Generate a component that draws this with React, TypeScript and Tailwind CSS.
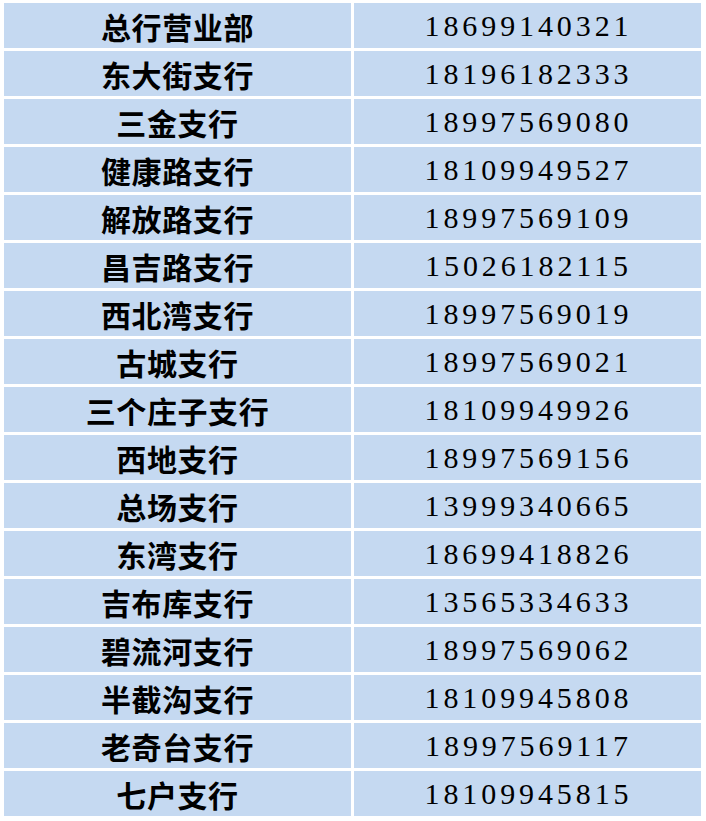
const rows: [string, string][] = [
  ["总行营业部", "18699140321"],
  ["东大街支行", "18196182333"],
  ["三金支行", "18997569080"],
  ["健康路支行", "18109949527"],
  ["解放路支行", "18997569109"],
  ["昌吉路支行", "15026182115"],
  ["西北湾支行", "18997569019"],
  ["古城支行", "18997569021"],
  ["三个庄子支行", "18109949926"],
  ["西地支行", "18997569156"],
  ["总场支行", "13999340665"],
  ["东湾支行", "18699418826"],
  ["吉布库支行", "13565334633"],
  ["碧流河支行", "18997569062"],
  ["半截沟支行", "18109945808"],
  ["老奇台支行", "18997569117"],
  ["七户支行", "18109945815"],
];

export default function App() {
  return (
    <div className="w-[706px] h-[821px] bg-white pt-[3px] pl-[4px] pr-[5px]">
      <div className="grid grid-cols-[347px_347px] gap-[3px]">
        {rows.map(([name, phone]) => (
          <div key={name} className="contents">
            <div
              className="h-[45px] bg-[#c5d9f1] flex items-center justify-center text-black font-bold text-[30px] leading-none tracking-[0.6px]"
              style={{ fontFamily: '"Noto Sans CJK SC", sans-serif' }}
            >
              {name}
            </div>
            <div
              className="h-[45px] bg-[#c5d9f1] flex items-center justify-center text-black text-[30px] leading-none tracking-[3.9px] pl-[2px]"
              style={{ fontFamily: '"Liberation Serif", serif' }}
            >
              {phone}
            </div>
          </div>
        ))}
      </div>
    </div>
  );
}
